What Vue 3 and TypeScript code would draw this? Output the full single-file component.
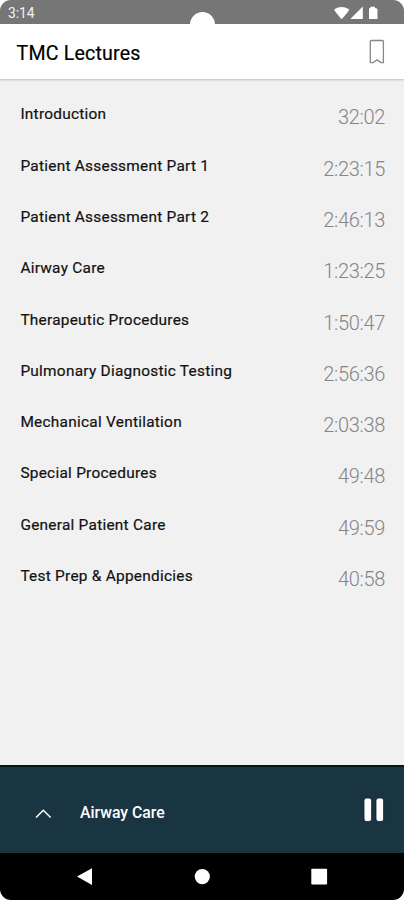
<script setup lang="ts">
interface Lecture {
  title: string
  duration: string
}

const lectures: Lecture[] = [
  { title: 'Introduction', duration: '32:02' },
  { title: 'Patient Assessment Part 1', duration: '2:23:15' },
  { title: 'Patient Assessment Part 2', duration: '2:46:13' },
  { title: 'Airway Care', duration: '1:23:25' },
  { title: 'Therapeutic Procedures', duration: '1:50:47' },
  { title: 'Pulmonary Diagnostic Testing', duration: '2:56:36' },
  { title: 'Mechanical Ventilation', duration: '2:03:38' },
  { title: 'Special Procedures', duration: '49:48' },
  { title: 'General Patient Care', duration: '49:59' },
  { title: 'Test Prep & Appendicies', duration: '40:58' },
]
</script>

<template>
  <div class="screen">
    <div class="status">
      <span class="clock">3:14</span>
      <span class="camera"></span>
      <svg class="signals" width="46" height="14" viewBox="0 0 46 14" fill="#fff">
        <path d="M0.3 3.2Q7.5-1.4 15 3.2L14.6 5L8.6 12.2Q7.6 13.2 6.6 12.2L0.8 5Z" />
        <path d="M28.8 0.5V13H16.3Z" />
        <path d="M35 3.2Q35 2 36.4 2V0.8H41V2Q43.5 2 43.5 3.6V13H35Z" />
      </svg>
    </div>
    <header class="header">
      <h1>TMC Lectures</h1>
      <svg class="bookmark" width="16" height="26" viewBox="0 0 16 26" fill="none" stroke="#888" stroke-width="1.3">
        <path d="M2.3 1.5H13.4Q14.4 1.5 14.4 2.5V23.6H12L8 20.9L4 23.6H1.3V2.5Q1.3 1.5 2.3 1.5Z" />
      </svg>
    </header>
    <ul class="list">
      <li v-for="item in lectures" :key="item.title">
        <span class="title">{{ item.title }}</span>
        <span class="time">{{ item.duration }}</span>
      </li>
    </ul>
    <section class="player">
      <svg class="chevron" width="18" height="12" viewBox="0 0 18 12" fill="none" stroke="#fff" stroke-width="1.5">
        <path d="M2 10.5L9.3 3.2L16.6 10.5" />
      </svg>
      <span class="playing">Airway Care</span>
      <svg class="pause" width="22" height="26" viewBox="0 0 22 26" fill="#fff" stroke="#0a1b38" stroke-width="0.8">
        <rect x="1" y="1" width="7.6" height="23.5" rx="2.5" />
        <rect x="13" y="1" width="7.6" height="23.5" rx="2.5" />
      </svg>
    </section>
    <nav class="nav">
      <svg width="404" height="47" viewBox="0 0 404 47" fill="#fff">
        <path d="M92 15.3V32L77 23.6Z" />
        <circle cx="202.3" cy="23.6" r="7.6" />
        <rect x="311.3" y="15.7" width="15.8" height="15.8" rx="0.8" />
      </svg>
    </nav>
  </div>
</template>

<style>
body {
  background: #fff;
}
</style>

<style scoped>
.screen {
  display: flex;
  flex-direction: column;
  box-sizing: border-box;
  width: 404px;
  height: 900px;
  overflow: hidden;
  border-radius: 11px;
  background: #f1f1f1;
  font-family: Roboto, sans-serif;
}
.status {
  position: relative;
  display: flex;
  flex: none;
  justify-content: space-between;
  height: 24px;
  padding: 0 24.5px 0 8px;
  box-sizing: border-box;
  background: #767676;
}
.clock {
  color: #f4f4f4;
  font-size: 13.8px;
  line-height: 26px;
}
.camera {
  position: absolute;
  left: 190px;
  top: 11.5px;
  width: 25px;
  height: 25px;
  border-radius: 50%;
  background: #fff;
}
.signals {
  margin-top: 5.5px;
}
.header {
  display: flex;
  flex: none;
  align-items: center;
  justify-content: space-between;
  height: 55px;
  padding: 0 19px 0 16.5px;
  background: #fff;
  box-shadow: 0 1px 2px rgba(0, 0, 0, 0.22);
}
h1 {
  margin: 4px 0 0;
  color: #000;
  font-size: 19.6px;
  font-weight: 400;
  letter-spacing: 0.2px;
  line-height: 24px;
  -webkit-text-stroke: 0.2px #000;
}
.list {
  flex: 1;
  margin: 0;
  padding: 10.4px 19px 0 20.4px;
  list-style: none;
}
li {
  display: flex;
  justify-content: space-between;
  height: 51.3px;
}
.title {
  color: #111;
  font-size: 15.4px;
  font-weight: 400;
  letter-spacing: 0.26px;
  line-height: 51.2px;
  -webkit-text-stroke: 0.2px #111;
}
.time {
  color: #858585;
  font-size: 20px;
  font-weight: 300;
  letter-spacing: -0.3px;
  line-height: 56px;
}
.player {
  display: flex;
  flex: none;
  align-items: center;
  box-sizing: border-box;
  height: 88px;
  padding: 4px 19px 0 34px;
  border-top: 2px solid #07171c;
  background: #193541;
  color: #fff;
}
.chevron {
  margin-top: 2px;
}
.playing {
  margin-left: 28px;
  font-size: 15.8px;
  font-weight: 500;
}
.pause {
  margin: -5px 0 0 auto;
}
.nav {
  flex: none;
  height: 47px;
  background: #000;
}
.nav svg {
  display: block;
}
</style>
